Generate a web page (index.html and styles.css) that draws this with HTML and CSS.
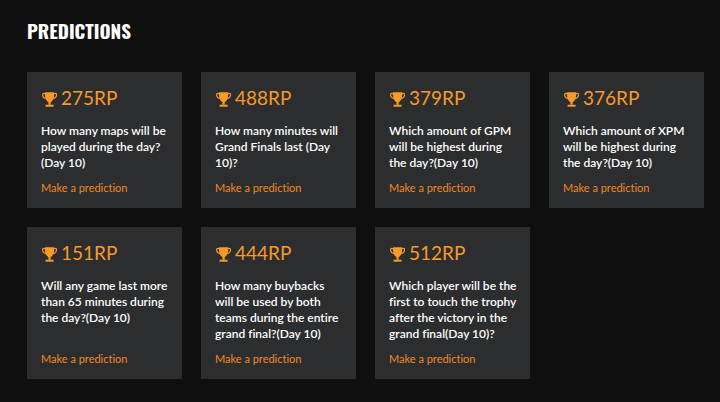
FILE: index.html
```html
<!DOCTYPE html>
<html lang="en">
<head>
    <meta charset="UTF-8">
    <meta name="viewport" content="width=device-width, initial-scale=1.0">
    <title>Predictions</title>
    <link rel="stylesheet" href="styles.css">
</head>
<body>
    <!-- Trophy icon, reused by every card -->
    <svg class="sprite" aria-hidden="true">
        <symbol id="trophy" viewBox="-1 0 28 28">
            <path d="M6 2h16v4c0 7-2 11-6 13.500V24h-4v-4.500C8 17 6 13 6 6z"/>
            <path d="M7 24h14v3.500H7z"/>
            <path d="M7 5C3 3 1.500 4.500 1.800 7c.4 3.500 3.700 6 7.200 6.500M21 5c4-2 5.500-.5 5.200 2-.4 3.500-3.700 6-7.200 6.500" fill="none" stroke="currentColor" stroke-width="2.200"/>
        </symbol>
    </svg>

    <main class="predictions">
        <h1 class="page-title">Predictions</h1>

        <div class="card-grid">
            <article class="card">
                <div class="reward"><svg class="trophy"><use href="#trophy"/></svg>275RP</div>
                <p class="question">How many maps will be played during the day?(Day 10)</p>
                <a class="predict-link" href="#">Make a prediction</a>
            </article>
            <article class="card">
                <div class="reward"><svg class="trophy"><use href="#trophy"/></svg>488RP</div>
                <p class="question">How many minutes will Grand Finals last (Day 10)?</p>
                <a class="predict-link" href="#">Make a prediction</a>
            </article>
            <article class="card">
                <div class="reward"><svg class="trophy"><use href="#trophy"/></svg>379RP</div>
                <p class="question">Which amount of GPM will be highest during the day?(Day 10)</p>
                <a class="predict-link" href="#">Make a prediction</a>
            </article>
            <article class="card">
                <div class="reward"><svg class="trophy"><use href="#trophy"/></svg>376RP</div>
                <p class="question">Which amount of XPM will be highest during the day?(Day 10)</p>
                <a class="predict-link" href="#">Make a prediction</a>
            </article>
            <article class="card">
                <div class="reward"><svg class="trophy"><use href="#trophy"/></svg>151RP</div>
                <p class="question">Will any game last more than 65 minutes during the day?(Day 10)</p>
                <a class="predict-link" href="#">Make a prediction</a>
            </article>
            <article class="card">
                <div class="reward"><svg class="trophy"><use href="#trophy"/></svg>444RP</div>
                <p class="question">How many buybacks will be used by both teams during the entire grand final?(Day 10)</p>
                <a class="predict-link" href="#">Make a prediction</a>
            </article>
            <article class="card">
                <div class="reward"><svg class="trophy"><use href="#trophy"/></svg>512RP</div>
                <p class="question">Which player will be the first to touch the trophy after the victory in the grand final(Day 10)?</p>
                <a class="predict-link" href="#">Make a prediction</a>
            </article>
        </div>
    </main>
</body>
</html>
```

FILE: styles.css
```css
* {
    box-sizing: border-box;
}
body {
    margin: 0;
    background-color: #0f0f0f;
    color: #fff;
    font-family: Lato, sans-serif;
    font-variant-ligatures: none;
}
.sprite {
    display: none;
}
.predictions {
    padding: 15px 16px 20px 27px;
}
.page-title {
    margin: 0 0 27px;
    font-family: Oswald, "Liberation Sans Narrow", "Liberation Sans", sans-serif;
    font-size: 19px;
    font-weight: bold;
    line-height: 30px;
    text-transform: uppercase;
}
.card-grid {
    display: grid;
    grid-template-columns: repeat(4, 1fr);
    gap: 19px;
}
.card {
    display: flex;
    flex-direction: column;
    align-items: flex-start;
    padding: 14px 12px 13px 14px;
    background-color: #2c2d2e;
}
.reward {
    display: flex;
    align-items: center;
    gap: 4px;
    margin-bottom: 13px;
    color: #f79a28;
    font-size: 19px;
    line-height: 24px;
}
.trophy {
    width: 16px;
    height: 16px;
    margin-top: 2px;
    fill: currentColor;
}
.question {
    margin: 0 0 10px;
    font-size: 12px;
    font-weight: 600;
    line-height: 16px;
}
.predict-link {
    margin-top: auto;
    color: #f08a24;
    font-size: 11px;
    line-height: 14px;
    text-decoration: none;
}
```
